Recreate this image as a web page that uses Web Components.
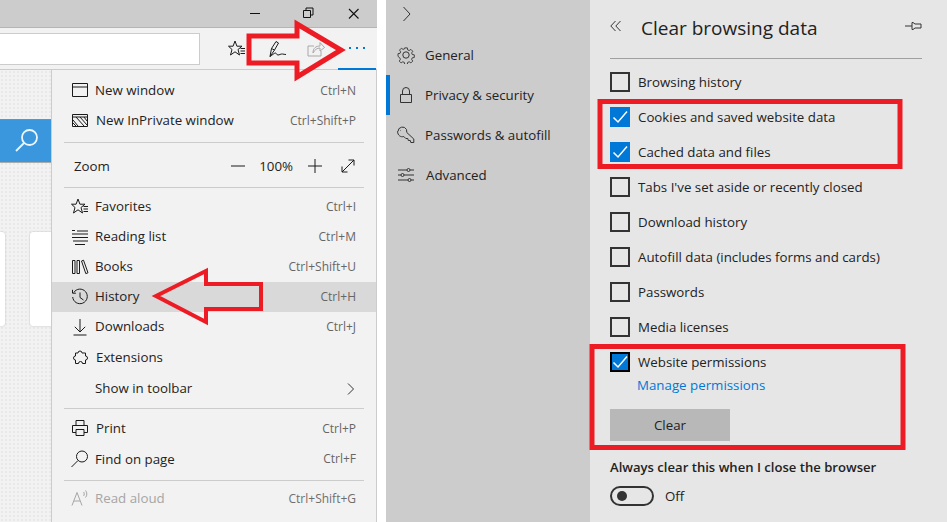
<!DOCTYPE html>
<html lang="en">
<head>
<meta charset="UTF-8">
<title>Clear browsing data</title>
<style>
  html, body { margin: 0; padding: 0; background: #fff; }
  body { width: 950px; height: 522px; overflow: hidden; font-family: "Open Sans", "Noto Sans", sans-serif; }
  svg.i { width: 18px; height: 18px; fill: none; stroke: #1a1a1a; stroke-width: 1; display: block; }
</style>
</head>
<body>
<screen-layout>
  <browser-pane slot="left">
    <menu-item label="New window" shortcut="Ctrl+N" drop>
      <svg slot="icon" class="i" viewBox="0 0 18 18"><path d="M1.500 2.500h15v13h-15zM1.500 6h15"/></svg>
    </menu-item>
    <menu-item label="New InPrivate window" shortcut="Ctrl+Shift+P" nudge="1" drop>
      <svg slot="icon" class="i" viewBox="0 0 18 18"><path d="M1.500 3.500h15v12h-15zM1.500 6h15M2 9l5 6M2 12l3 3M5 6l8 9M9 6l7 8M13 6l3 4" /></svg>
    </menu-item>
    <menu-sep style="margin-top:7px"></menu-sep>
    <zoom-row></zoom-row>
    <menu-sep></menu-sep>
    <menu-item label="Favorites" shortcut="Ctrl+I" style="margin-top:4px">
      <svg slot="icon" class="i" viewBox="0 0 18 18"><path d="M7 1l1.900 5.200H14L10 9.500l1.500 5.500L7 11.800 2.500 15 4 9.500.5 6.200h4.600zM12.500 8.500h4.500M12.500 11h4.500M12.500 13.500h4.500"/></svg>
    </menu-item>
    <menu-item label="Reading list" shortcut="Ctrl+M">
      <svg slot="icon" class="i" viewBox="0 0 18 18"><path d="M1 2.500h3M6 3h11M1 6h16M1 9.500h16M2 13h15M4 16.500h10"/></svg>
    </menu-item>
    <menu-item label="Books" shortcut="Ctrl+Shift+U">
      <svg slot="icon" class="i" viewBox="0 0 18 18"><path d="M1.500 2.500h2.500v13h-2.500zM6 2.500h2.500v13h-2.500zM10.500 3l2-.8 4.500 12.600-2.200.8z"/></svg>
    </menu-item>
    <menu-item label="History" shortcut="Ctrl+H" active>
      <svg slot="icon" class="i" viewBox="0 0 18 18"><path d="M2.800 4.500a7.300 7.300 0 1 1-1.100 4.500M1.500 1.800v3.400h3.400M9 4.500v5l3.500 2.500"/></svg>
    </menu-item>
    <menu-item label="Downloads" shortcut="Ctrl+J">
      <svg slot="icon" class="i" viewBox="0 0 18 18"><path d="M9 1v13M3.800 8.800l5.200 5.200 5.200-5.200M2.500 17h13"/></svg>
    </menu-item>
    <menu-item label="Extensions" nudge="1" tall>
      <svg slot="icon" class="i" viewBox="0 0 18 18"><path d="M7 4a2 2 0 0 1 4 0h3.500v3a2 2 0 0 1 0 4v3.500h-3a2 2 0 0 0-4 0h-3v-3.500a2 2 0 0 1 0-4v-3z"/></svg>
    </menu-item>
    <menu-item label="Show in toolbar" tall submenu></menu-item>
    <menu-sep style="margin-top:4px"></menu-sep>
    <menu-item label="Print" shortcut="Ctrl+P" nudge="1" style="margin-top:4px" drop>
      <svg slot="icon" class="i" viewBox="0 0 18 18"><path d="M5 6.500v-5h8v5M5 13.500h-3.500v-7h15v7h-3.500M5 10.500h8v6h-8z"/></svg>
    </menu-item>
    <menu-item label="Find on page" shortcut="Ctrl+F" tall drop>
      <svg slot="icon" class="i" viewBox="0 0 18 18"><circle cx="11" cy="6.500" r="5.500"/><path d="M7 10.500l-6.500 6.500"/></svg>
    </menu-item>
    <menu-sep style="margin-top:6px"></menu-sep>
    <menu-item label="Read aloud" shortcut="Ctrl+Shift+G" disabled style="margin-top:2px" drop>
      <svg slot="icon" class="i" style="stroke:#a6a6a6" viewBox="0 0 18 18"><path d="M1 16.500l5-13 5 13M3 12h6M12.500 3c1 1 1 3 0 4M14.500 1.500c1.800 2 1.800 5 0 7"/></svg>
    </menu-item>
  </browser-pane>

  <settings-pane slot="right">
    <check-row label="Browsing history"></check-row>
    <check-row label="Cookies and saved website data" checked></check-row>
    <check-row label="Cached data and files" checked></check-row>
    <check-row label="Tabs I've set aside or recently closed"></check-row>
    <check-row label="Download history"></check-row>
    <check-row label="Autofill data (includes forms and cards)"></check-row>
    <check-row label="Passwords"></check-row>
    <check-row label="Media licenses"></check-row>
    <check-row label="Website permissions" checked focused></check-row>
  </settings-pane>
</screen-layout>

<script>
  // small helper so each element only declares its css + markup
  class ShadowBase extends HTMLElement {
    connectedCallback() {
      if (this.shadowRoot) return;
      this.attachShadow({ mode: 'open' });
      this.shadowRoot.innerHTML = this.render();
    }
  }

  class ScreenLayout extends ShadowBase {
    render() {
      return `
        <style>
          :host { display: block; width: 950px; height: 522px; position: relative; overflow: hidden; }
          .panes { display: flex; height: 100%; }
          .left { width: 377px; flex: none; }
          .right { width: 561px; margin-left: 9px; flex: none; }
          svg { position: absolute; left: 0; top: 0; pointer-events: none; }
        </style>
        <div class="panes">
          <div class="left"><slot name="left"></slot></div>
          <div class="right"><slot name="right"></slot></div>
        </div>
        <svg width="950" height="522" fill="none" stroke="#ed1c24">
          <path stroke-width="5" d="M249 36H297V24L341 50 297 77V63H249Z"/>
          <path stroke-width="4" d="M156 296L206 271V284H261V309H206V322Z"/>
          <path stroke-width="5" d="M600 101.500H900V166.500H600Z"/>
          <path stroke-width="5" d="M592 346.500H903V447.500H592Z"/>
        </svg>`;
    }
  }

  class BrowserPane extends ShadowBase {
    render() {
      return `
        <style>
          :host { display: flex; flex-direction: column; height: 522px; background: #f2f2f2; }
          .title { height: 27px; background: #ccc; border-bottom: 1px solid #b5b5b5; display: flex; align-items: center; justify-content: flex-end; flex: none; }
          .title svg { display: block; width: 46px; height: 27px; fill: none; stroke: #111; }
          .tools { height: 41px; flex: none; display: flex; align-items: center; border-bottom: 1px solid #ccc; position: relative; }
          .address { width: 200px; background: #fff; border: 1px solid #ccc; border-left: 0; margin-right: 28px; box-sizing: border-box; height: 32px; }
          .tools svg { display: block; fill: none; stroke: #1a1a1a; }
          .more { position: absolute; right: 1px; top: 0; bottom: -1px; width: 38px; border-bottom: 2px solid #0078d7; box-sizing: border-box; display: flex; align-items: center; justify-content: center; color: #0078d7; }
          .more i { width: 2px; height: 2px; background: #0078d7; margin: 0 2.500px; }
          .body { flex: 1; display: flex; min-height: 0; }
          .page { width: 51px; flex: none; box-sizing: border-box; padding-top: 49px; background: #f2f2f2 radial-gradient(#e8e8e8 .7px, transparent .8px) 0 0 / 4px 4px; }
          .search { height: 44px; background: #3a96dd; border-top: 1px solid #8a8a8a; border-bottom: 1px solid #aaa; box-sizing: border-box; display: flex; justify-content: flex-end; align-items: center; padding-right: 11px; }
          .search svg { display: block; fill: none; stroke: #eef6fc; stroke-width: 1.800; }
          .cards { display: flex; margin-top: 69px; justify-content: space-between; }
          .cards div { height: 94px; background: #fff; box-shadow: 0 0 2px #bbb; border-radius: 3px; }
          .cards div:first-child { width: 5px; border-radius: 0 3px 3px 0; }
          .cards div:last-child { width: 21px; border-radius: 3px 0 0 3px; }
          .menu { flex: 1; border-left: 1px solid #ccc; border-right: 1px solid #ccc; padding: 5px 0 0; box-sizing: border-box; min-width: 0; }
        </style>
        <div class="title">
          <svg viewBox="0 0 46 27"><path d="M11 13.500h10"/></svg>
          <svg viewBox="0 0 46 27"><path d="M18.500 10.500h7v7h-7zM21 10.500v-2.500h7v7h-2.500"/></svg>
          <svg viewBox="0 0 46 27" style="stroke-width:1.100"><path d="M18 9l9.500 9.500M27.500 9L18 18.500"/></svg>
        </div>
        <div class="tools">
          <div class="address"></div>
          <svg width="18" height="18" viewBox="0 0 18 18" style="margin-right:23px"><path d="M7 1l1.900 5.200H14L10 9.500l1.500 5.500L7 11.800 2.500 15 4 9.500.5 6.200h4.600zM12.500 8.500h4.500M12.500 11h4.500M12.500 13.500h4.500"/></svg>
          <svg width="18" height="18" viewBox="0 0 18 18" style="margin-right:19px"><path d="M1 16.500L2.500 8.500 7 1.500l2.500 1.500-4 7zM2.500 8.500l3 1.500M1 16.500c2-1 4-3.500 5.500-3.500 1 0 1 2 2.500 2 1.500 0 2.500-1.200 4.500-1 1 .1 2 .5 3.500.5"/></svg>
          <svg width="20" height="20" viewBox="0 0 20 20" style="stroke:#a8a8a8"><path d="M15 12v5H2V7h6M7 14c0-5 3-7 7-7V3.500l4.500 5L14 12V9c-3 0-5 1.500-7 5z"/></svg>
          <div class="more"><i></i><i></i><i></i></div>
        </div>
        <div class="body">
          <div class="page">
            <div class="search">
              <svg width="26" height="26" viewBox="0 0 26 26"><circle cx="15.500" cy="9.500" r="7.500"/><path d="M10 15L2 23"/></svg>
            </div>
            <div class="cards"><div></div><div></div></div>
          </div>
          <div class="menu"><slot></slot></div>
        </div>`;
    }
  }

  class MenuItem extends ShadowBase {
    render() {
      const label = this.getAttribute('label') || '';
      const shortcut = this.getAttribute('shortcut') || '';
      const nudge = this.getAttribute('nudge') || 0;
      const chev = this.hasAttribute('submenu')
        ? '<svg class="chev" width="10" height="14" viewBox="0 0 10 14"><path d="M2 1.500l5.500 5.500-5.500 5.500"/></svg>' : '';
      return `
        <style>
          :host { display: flex; align-items: center; height: 30px; padding: 0 20px 0 19px; font-size: 13.300px; color: #222; }
          :host([tall]) { height: 31px; }
          :host([active]) { background: #d9d9d9; }
          :host([disabled]) { color: #a6a6a6; }
          .icon { width: 24px; flex: none; display: flex; }
          .label { flex: 1; white-space: nowrap; padding-left: ${nudge}px; position: relative; top: -1px; }
          .short { font-size: 12px; color: #666; white-space: nowrap; position: relative; top: -1px; }
          :host([drop]) .label, :host([drop]) .short { top: 0; }
          :host([disabled]) .short { color: #6e6e6e; }
          .chev { display: block; fill: none; stroke: #333; }
        </style>
        <span class="icon"><slot name="icon"></slot></span>
        <span class="label">${label}</span>
        <span class="short">${shortcut}</span>${chev}`;
    }
  }

  class MenuSep extends ShadowBase {
    render() {
      return `
        <style>:host { display: block; margin: 0 12px; height: 1px; background: #ccc; }</style>`;
    }
  }

  class ZoomRow extends ShadowBase {
    render() {
      return `
        <style>
          :host { display: flex; align-items: center; height: 44px; padding: 2px 21px 0 22px; box-sizing: border-box; font-size: 13.300px; color: #222; }
          .name { flex: 1; }
          svg { display: block; fill: none; stroke: #1a1a1a; }
          .pct { margin: 0 15px 0 14px; font-size: 13.300px; }
        </style>
        <span class="name">Zoom</span>
        <svg width="14" height="14" viewBox="0 0 14 14"><path d="M0 7h14"/></svg>
        <span class="pct">100%</span>
        <svg width="14" height="14" viewBox="0 0 14 14"><path d="M0 7h14M7 0v14"/></svg>
        <svg width="14" height="14" viewBox="0 0 14 14" style="margin-left:19px"><path d="M1 13L13 1M7.500 1H13v5.500M1 7.500V13h5.500"/></svg>`;
    }
  }

  class SettingsPane extends ShadowBase {
    render() {
      return `
        <style>
          :host { display: flex; height: 522px; background: #e6e6e6; color: #222; }
          nav { width: 204px; flex: none; background: #ccc; font-size: 13.300px; }
          .open { height: 35px; padding: 6px 0 0 16px; box-sizing: border-box; }
          .open svg { display: block; fill: none; stroke: #333; }
          .main { flex: 1; padding: 0 25px 0 20px; min-width: 0; }
          header { display: flex; align-items: center; border-bottom: 1px solid #a0a0a0; padding-bottom: 3px; box-sizing: border-box; height: 59px; }
          header svg { display: block; fill: none; stroke: #333; flex: none; margin-top: -4px; }
          h1 { flex: 1; margin: 0 0 0 19px; font-weight: 400; font-size: 19px; color: #222; }
          .rows { padding-top: 5px; }
          a { display: block; margin: -6px 0 0 27px; font-size: 13.300px; color: #0078d7; height: 24px; line-height: 24px; }
          button { display: block; width: 120px; height: 32px; border: 0; margin-top: 12px; padding: 0; font: inherit; font-size: 13.300px; color: #222; background: #b8b8b8 radial-gradient(#b1b1b1 .6px, transparent .7px) 0 0 / 6px 6px; }
          .always { margin-top: 16px; font-size: 13.100px; font-weight: 600; color: #222; line-height: 20px; }
          .tog { display: flex; align-items: center; gap: 11px; margin-top: 9px; font-size: 13.300px; }
          .track { width: 44px; height: 20px; border: 2px solid #333; border-radius: 10px; box-sizing: border-box; display: flex; align-items: center; padding-left: 5px; }
          .track i { width: 10px; height: 10px; border-radius: 50%; background: #333; }
        </style>
        <nav>
          <div class="open"><svg width="12" height="16" viewBox="0 0 12 16"><path d="M1.500 1l6.500 7-6.500 7"/></svg></div>
          <nav-item label="General">
            <svg slot="icon" width="18" height="18" viewBox="0 0 18 18"><circle cx="9" cy="9" r="3.200"/><path d="M7.500 1h3l.4 2.300 1.700.7 1.900-1.300 2.100 2.100-1.300 1.900.7 1.700 2.300.4v3l-2.300.4-.7 1.700 1.300 1.900-2.100 2.100-1.900-1.300-1.700.7-.4 2.300h-3l-.4-2.300-1.700-.7-1.900 1.300-2.100-2.100 1.300-1.900-.7-1.700L0 10.500v-3l2.300-.4.7-1.700-1.300-1.900 2.100-2.100 1.900 1.300 1.700-.7z" transform="translate(1 1) scale(.89)"/></svg>
          </nav-item>
          <nav-item label="Privacy &amp; security" current>
            <svg slot="icon" width="18" height="18" viewBox="0 0 18 18"><path d="M3.500 8.500h11v8h-11zM5.500 8.500V5a3.500 3.500 0 0 1 7 0v3.500"/></svg>
          </nav-item>
          <nav-item label="Passwords &amp; autofill">
            <svg slot="icon" width="18" height="18" viewBox="0 0 18 18"><path d="M1 5.500a4.500 4.500 0 0 1 8.500-2l.3 3 7 6.500v3.500h-3l-.5-2h-2l-.5-2h-2l-2-2c-3 1-6-1-6.300-5zM3.500 4.500h.5"/></svg>
          </nav-item>
          <nav-item label="Advanced" shift="1">
            <svg slot="icon" width="18" height="18" viewBox="0 0 18 18"><path d="M1 4h9M13 4h4M1 9h3M7 9h10M1 14h10M14 14h3"/><circle cx="11.500" cy="4" r="1.500"/><circle cx="5.500" cy="9" r="1.500"/><circle cx="12.500" cy="14" r="1.500"/></svg>
          </nav-item>
        </nav>
        <div class="main">
          <header>
            <svg width="12" height="12" viewBox="0 0 12 12"><path d="M5.500 1L.8 6l4.700 5M10.500 1L5.800 6l4.700 5"/></svg>
            <h1>Clear browsing data</h1>
            <svg width="17" height="12" viewBox="0 0 17 12"><path d="M0 6h7M7 2.500h1l2 1.500h6v4h-6l-2 1.500H7z"/></svg>
          </header>
          <div class="rows">
            <slot></slot>
            <a>Manage permissions</a>
            <button>Clear</button>
            <div class="always">Always clear this when I close the browser</div>
            <div class="tog"><span class="track"><i></i></span>Off</div>
          </div>
        </div>`;
    }
  }

  class NavItem extends ShadowBase {
    render() {
      const shift = this.getAttribute('shift') || 0;
      return `
        <style>
          :host { display: flex; align-items: center; height: 40px; padding-left: 11px; position: relative; }
          :host([current])::before { content: ""; position: absolute; left: 0; top: 0; bottom: 0; width: 4px; background: #0078d7; }
          .icon { width: 28px; flex: none; display: flex; }
          ::slotted(svg) { fill: none; stroke: #333; display: block; }
          .t { padding-left: ${shift}px; white-space: nowrap; }
        </style>
        <span class="icon"><slot name="icon"></slot></span>
        <span class="t">${this.getAttribute('label')}</span>`;
    }
  }

  class CheckRow extends ShadowBase {
    render() {
      const tick = this.hasAttribute('checked')
        ? '<svg width="20" height="20" viewBox="0 0 20 20"><path d="M3.500 10.500l4.500 4.500 9-10.500"/></svg>' : '';
      return `
        <style>
          :host { display: flex; align-items: center; height: 35px; font-size: 13.300px; color: #222; }
          .box { width: 20px; height: 20px; flex: none; box-sizing: border-box; border: 2px solid #333; margin-right: 8px; position: relative; }
          :host([checked]) .box { background: #0078d7; border-color: #0078d7; }
          :host([focused]) .box { border-color: #000; }
          svg { position: absolute; left: -2px; top: -2px; display: block; fill: none; stroke: #fff; stroke-width: 1.500; }
          span { white-space: nowrap; }
        </style>
        <div class="box">${tick}</div>
        <span>${this.getAttribute('label')}</span>`;
    }
  }

  customElements.define('screen-layout', ScreenLayout);
  customElements.define('browser-pane', BrowserPane);
  customElements.define('menu-item', MenuItem);
  customElements.define('menu-sep', MenuSep);
  customElements.define('zoom-row', ZoomRow);
  customElements.define('settings-pane', SettingsPane);
  customElements.define('nav-item', NavItem);
  customElements.define('check-row', CheckRow);
</script>
</body>
</html>
